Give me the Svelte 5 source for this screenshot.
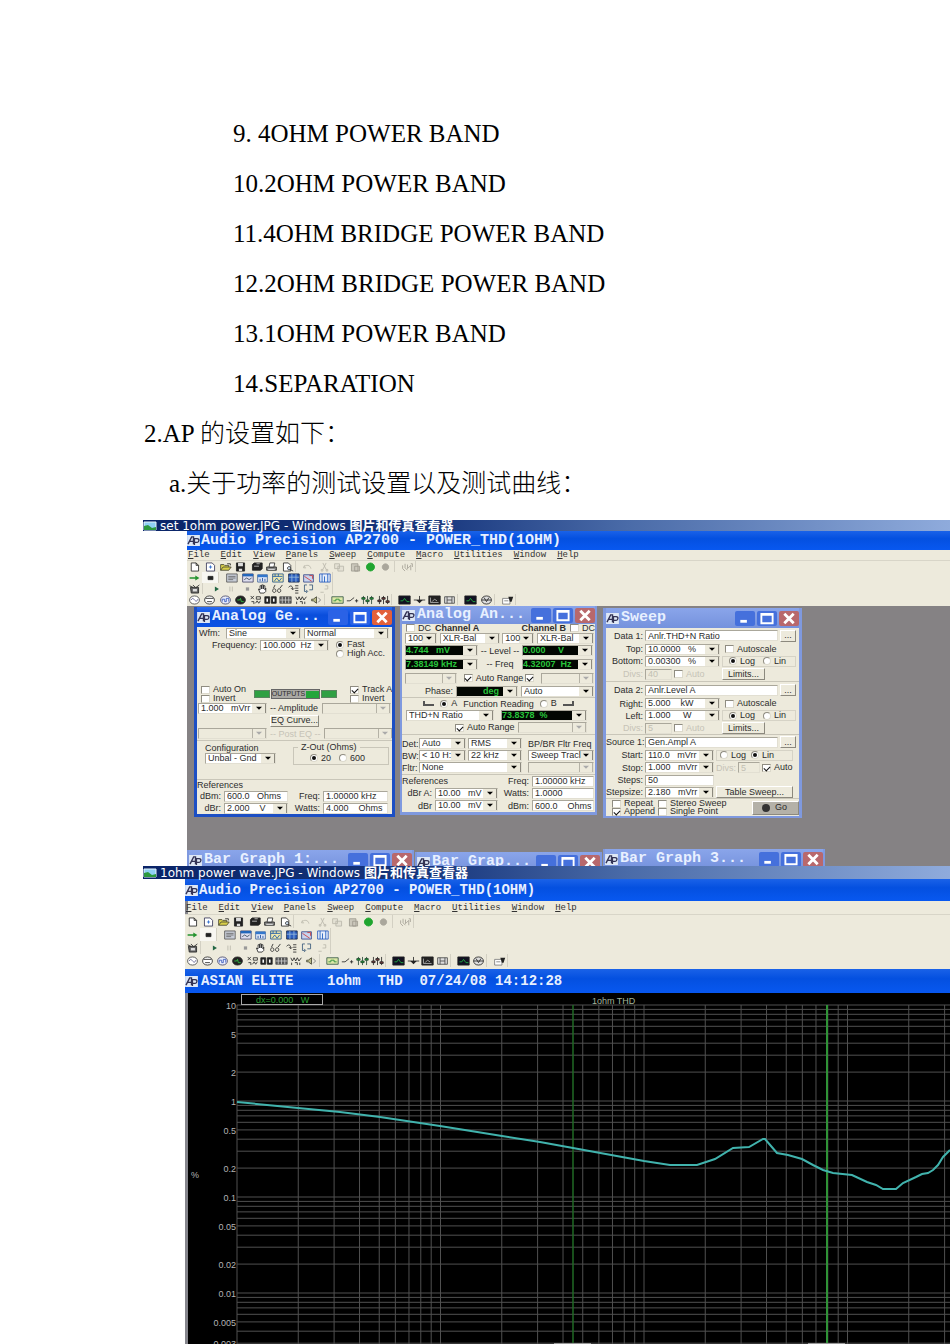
<script>
  const powerBands = [
    '9. 4OHM POWER BAND',
    '10.2OHM POWER BAND',
    '11.4OHM BRIDGE POWER BAND',
    '12.2OHM BRIDGE POWER BAND',
    '13.1OHM POWER BAND',
    '14.SEPARATION'
  ];

  const menus = ['File', 'Edit', 'View', 'Panels', 'Sweep', 'Compute', 'Macro', 'Utilities', 'Window', 'Help'];

  // Each icon is a list of [path, fill, stroke] on a 16 x 12 grid.
  const K = '#222';
  const G = '#b9b6aa';
  const N = 'none';
  const icons = {
    new: [['M4 1h6l3 3v7H4z M10 1v3h3', '#fff', K]],
    newTest: [['M3 1h7l3 3v7H3z', '#fff', '#335'], ['M6 6h4 M8 4v4', N, '#26c']],
    open: [['M2 10V3h4l1 1h5v2 M2 10l3-4h10l-3 4z', '#d8cf4a', '#443'], ['M10 2h4v2', N, K]],
    save: [['M3 1h10v10H3z', K, K], ['M5 1h6v4H5z M6 8h4v3H6z', '#ddd', N]],
    saveAll: [['M5 1h10v7l-2 2H3V3z', K, K], ['M5 5h6 M8 2h4', N, '#ccc']],
    print: [['M2 6h12v4H2z', '#888', K], ['M5 6l1-5h6l-1 5z', '#fff', K], ['M4 9h8', N, '#eee']],
    preview: [['M3 1h6l3 3v7H3z', '#fff', K], ['M10 5.500a2 2 0 1 1-.1 0z M11 9l4 2', '#cde', K]],
    undo: [['M3 4l-1 3h3 M2 6c3-3 8-3 9 2', N, G]],
    cut: [['M6 1l4 8 M10 1L6 9 M5 9h1v2H4V9z M10 9h2v2h-2z', N, G]],
    copy: [['M2 2h6v6H2z M6 5h7v6H6z', '#e4e1d4', G]],
    paste: [['M3 2h8v9H3z M7 5h6v6H7z', '#cbc8bc', '#9c998e']],
    go: [['M8 1a5 5 0 1 1-.1 0z', '#1fa52f', '#1fa52f']],
    stopGrey: [['M8 2a4 4 0 1 1-.1 0z', '#aaa79c', '#aaa79c']],
    ruler: [['M2 4v4l3 3 M5 2v5l3 3 M8 3v5l4-4v6 M12 2h2v4', N, '#a29f94']],
    arrow: [['M2 5h7V3l5 3-5 3V7H2z', '#23922d', N]],
    block: [['M5 4h6v4H5z', K, K]],
    p1: [['M2 1h13v10H2z', '#c7ccd6', '#555'], ['M4 4h9 M4 6h9 M4 8h6', N, '#666']],
    p2: [['M2 1h13v10H2z', '#dde', '#446'], ['M2 1h13v3H2z', '#26b', N], ['M4 8l3-2 3 2 3-2', N, '#345']],
    p3: [['M2 2h12v9H2z', '#dfe6f6', '#469'], ['M2 2h12v3H2z', '#37c', N], ['M5 7v3 M8 6v4 M11 7v3', N, '#149']],
    p4: [['M2 1h13v10H2z', '#efe7ac', '#258'], ['M2 4h12 M5 1v3 M9 1v3 M4 10l3-4 3 4 3-4', N, '#15a']],
    p5: [['M2 1h13v10H2z', '#2c5fc0', '#124'], ['M2 5h13 M6 1v10 M11 1v10', N, '#9bd']],
    p6: [['M2 2h12v9H2z', '#c8d4ee', '#348'], ['M3 4l9 6 M9 3h4v4', N, '#c33']],
    p7: [['M2 1h13v10H2z', '#e8eefa', '#25b'], ['M5 1v10 M8 4v7 M12 1v10', N, '#15b']],
    macro: [['M3 4h10v7H4z', '#666', K], ['M2 2l4 2 M6 1l3 3 M14 1l-4 3', N, K], ['M6 6h5v3H6z', '#ddd', N]],
    play: [['M6 3l5 3-5 3z', '#264', N]],
    pause: [['M6 3v6 M9 3v6', N, G]],
    stop: [['M6 4h4v4H6z', '#999', N]],
    hand: [['M5 11L3 6l2 1V2h2v4-5h2v5-4h2v5l1-2v4l-2 2z', '#fff', K]],
    glasses: [['M2 8c0-3 4-3 4 0s-4 3-4 0 M8 8c0-3 4-3 4 0s-4 3-4 0 M3 5l2-4 M11 5l3-4', N, K]],
    step1: [['M2 4c2-3 5-2 5 2 M5 5l2 2 2-2 M10 2h4 M10 5h4 M10 8h4 M10 11h4', N, K]],
    step2: [['M6 1H3v8h3 M5 7l2 2-2 2 M9 1h4v6H9', N, '#357']],
    step3: [['M3 10h4 M9 2h3v4H8', N, G]],
    genA: [['M8 1c8 0 8 10 0 10S0 1 8 1z', '#fff', '#444'], ['M4 6c2-4 3-1 4 0s3 3 4-1', N, '#558']],
    genB: [['M8 1c8 0 8 10 0 10S0 1 8 1z', '#fff', K], ['M3 4h10 M5 8h6', N, K]],
    genC: [['M8 1c8 0 8 10 0 10S0 1 8 1z', '#e8ecfa', '#446'], ['M4 8V5h3v3h2V4h3v4', N, '#35b']],
    genD: [['M8 1c8 0 8 10 0 10S0 1 8 1z', K, K], ['M4 6h3l1-2 1 4h3', N, '#3c4']],
    dcx: [['M2 1l4 4 M6 1L2 5 M9 2h5v3H9z M3 8h3v3 M8 10l2-3 2 3 2-3', N, K]],
    pair: [['M1 2h6v8H1z M9 2h6v8H9z', K, K], ['M3 4h2v4H3z M11 4h2v4h-2z', '#fff', N]],
    bars: [['M1 2h14v8H1z', '#555', '#555'], ['M1 6h14 M4 2v8 M8 2v8 M12 2v8', N, '#ccc']],
    wave: [['M1 2l2 4 2-4 2 4 2-4 2 4 3-4 M2 8v3 M6 8h3v3 M12 8v3', N, K]],
    speaker: [['M2 5h2l4-3v8L4 7H2z', '#bb8', '#443'], ['M10 3l3 3-3 3', N, '#777']],
    meter: [['M1 2h14v8H1z', '#dce8a8', '#354'], ['M3 7h3V5h4v2h3', N, '#283']],
    sw: [['M1 7h4l5-4 M11 7h4 M13 5v4', N, K]],
    mixA: [['M3 1v10 M8 1v10 M13 1v10', N, '#243'], ['M1 3h4v2H1z M6 6h4v2H6z M11 3h4v2h-4z', '#2a3', '#243']],
    mixB: [['M3 1v10 M8 1v10 M13 1v10', N, K], ['M1 6h4v2H1z M6 3h4v2H6z M11 7h4v2h-4z', '#844', K]],
    scope: [['M1 1h14v10H1z', '#112', K], ['M3 7h3l2-3 3 4h3', N, '#2b4']],
    down: [['M1 6h14 M8 1v6', N, K], ['M4 6h8l-4 4z', K, N]],
    scopeB: [['M1 1h14v10H1z', '#222', K], ['M3 3v6h10 M5 8l3-3 3 2', N, '#bbb']],
    film: [['M2 2h12v8H2z M5 2v8 M11 2v8 M5 6h6', '#ddd', '#444']],
    globe: [['M8 1c8 0 8 10 0 10S0 1 8 1z', '#ddd', K], ['M2 6h12 M5 3l3 5 3-5', N, K]],
    note: [['M2 4h9v7H2z', '#fff', '#777'], ['M4 7h5', N, '#777'], ['M9 2h6l-2 6h-2z', K, N]]
  };

  const toolRows = [
    [['new', 'newTest', 'open', 'save', 'saveAll', 'print', 'preview'], ['undo', 'cut', 'copy', 'paste', 'go', 'stopGrey'], ['ruler']],
    [['arrow', 'block'], ['p1', 'p2', 'p3', 'p4', 'p5', 'p6', 'p7']],
    [['macro'], ['play', 'pause', 'stop', 'hand', 'glasses', 'step1', 'step2', 'step3']],
    [['genA', 'genB', 'genC', 'genD', 'dcx', 'pair', 'bars', 'wave', 'speaker'], ['meter', 'sw', 'mixA', 'mixB'], ['scope', 'down', 'scopeB', 'film'], ['scope', 'globe'], ['note']]
  ];

  // Keeps runs of spaces between a number and its unit.
  const fixed = (text) => text.replaceAll(' ', '\u00a0');

  // Logarithmic chart geometry, in plot units.
  const left = 49;
  const top = 12;
  const decadeX = 203.5;
  const decadeY = 96;
  const xs = [];
  for (let d = 0; d < 4; d++) for (let n = 1; n < 10; n++) xs.push(left + decadeX * (d + Math.log10(n)));
  const ys = [];
  for (let d = 0; d < 4; d++) for (let n = 10; n > 1; n--) ys.push(top + decadeY * (d + 1 - Math.log10(n)));
  const ticks = ['10', '5', '2', '1', '0.5', '0.2', '0.1', '0.05', '0.02', '0.01', '0.005', '0.003'];
  const tickY = (t) => top + decadeY * (1 - Math.log10(Number(t)));
  const curve =
    '49,109 110,115 152,119 192,124 252,133 314,143 352,149 385,155 456,168 482,172 509,172 527,166 545,155 561,154 575,146 577,146 589,160 600,162 614,166 625,172 635,177 645,180 664,182 679,189 688,192 695,196 708,196 715,190 728,184 734,181 740,180 745,177 750,172 755,164 762,157';
</script>

{#snippet logo()}
  <svg class="logo" viewBox="0 0 14 12" aria-hidden="true">
    <path d="M0 0h14v12H0z" fill="#dfe8f6" />
    <path d="M1 10l4-8h2v8M3 7h4M8 11V4h3c3 0 2 4 0 4H8" fill="none" stroke="#335" stroke-width="1.500" />
  </svg>
{/snippet}

{#snippet viewerBar(text)}
  <header class="viewer-bar">
    <svg viewBox="0 0 14 10" aria-hidden="true">
      <path d="M1 1h12v8H1z" fill="#8fd0f5" stroke="#e8f4fa" />
      <path d="M1 9V5l4-1 4 3 4-1v3z" fill="#2d9a3f" />
    </svg>
    <span>{text} - Windows <b>图片和传真查看器</b></span>
  </header>
{/snippet}

{#snippet appChrome()}
  <h2 class="app-title">{@render logo()}<span>Audio Precision AP2700 - POWER_THD(1OHM)</span></h2>
  <nav class="menu">
    {#each menus as m}<button><u>{m[0]}</u>{m.slice(1)}</button>{/each}
  </nav>
  <div class="tools">
    {#each toolRows as row, i}
      <div class="tool-row t{i}">
        {#each row as group}
          <div class="tool-group" style:flex-grow={group.length}>
            {#each group as name}
              <button aria-label={name} class:pressed={name === 'block'}>
                <svg viewBox="0 0 16 12" aria-hidden="true">
                  {#each icons[name] as [d, fill, stroke]}<path {d} {fill} {stroke} />{/each}
                </svg>
              </button>
            {/each}
          </div>
        {/each}
      </div>
    {/each}
  </div>
{/snippet}

{#snippet caption(text)}
  <header class="caption">
    {@render logo()}
    <h3>{text}</h3>
    <button aria-label="Minimize"><svg viewBox="0 0 20 16"><path d="M5 11h7" stroke="#fff" stroke-width="3" /></svg></button>
    <button aria-label="Maximize"><svg viewBox="0 0 20 16"><path d="M4 3h12v10H4zM4 4h12" fill="none" stroke="#fff" stroke-width="2" /></svg></button>
    <button aria-label="Close" class="close"><svg viewBox="0 0 20 16"><path d="M5 3l10 10M15 3L5 13" stroke="#fff" stroke-width="3" /></svg></button>
  </header>
{/snippet}

{#snippet pick(id, value, label = null, kind = '')}
  <select {id} aria-label={label} class={kind} disabled={kind === 'off'}><option>{fixed(value)}</option></select>
{/snippet}

{#snippet tick(text, checked = false, disabled = false)}
  <label class="choice" class:dim={disabled}><input type="checkbox" {checked} {disabled} />{text}</label>
{/snippet}

{#snippet dot(name, text, checked = false)}
  <label class="choice"><input type="radio" {name} {checked} />{text}</label>
{/snippet}

<main>
  <section class="text">
    <ol>
      {#each powerBands as line}<li>{line}</li>{/each}
    </ol>
    <p>2.AP 的设置如下：</p>
    <p class="sub">a.关于功率的测试设置以及测试曲线：</p>
  </section>

  <section class="shot first">
    {@render viewerBar('set 1ohm power.JPG')}
    <div class="app">
      {@render appChrome()}
      <div class="desktop">
        <article class="window active generator">
          {@render caption('Analog Ge...')}
          <div class="body">
            <div class="g-wave">
              <label for="wfm">Wfm:</label>{@render pick('wfm', 'Sine')}{@render pick('wfm2', 'Normal', 'Waveform mode')}
            </div>
            <div class="g-freq">
              <label for="freq">Frequency:</label>{@render pick('freq', '100.000  Hz')}
              <div class="stack">{@render dot('speed', 'Fast', true)}{@render dot('speed', 'High Acc.')}</div>
            </div>
            <div class="g-out">
              <div class="stack">{@render tick('Auto On')}{@render tick('Invert')}</div>
              <div class="outputs"><i></i><button>OUTPUTS<i></i></button><i></i></div>
              <div class="stack">{@render tick('Track A', true)}{@render tick('Invert')}</div>
            </div>
            <div class="g-three">
              {@render pick('amp', '1.000   mVrr')}<label for="amp">-- Amplitude</label>{@render pick('amp2', '', 'Amplitude B', 'off')}
            </div>
            <div class="g-three"><span></span><button class="push">EQ Curve...</button><span></span></div>
            <div class="g-three dim">
              {@render pick('eq', '', null, 'off')}<label for="eq">-- Post EQ --</label>{@render pick('eq2', '', 'Post EQ B', 'off')}
            </div>
            <div class="g-config rule">
              <div><label for="conf">Configuration</label>{@render pick('conf', 'Unbal - Gnd')}</div>
              <fieldset><legend>Z-Out (Ohms)</legend>{@render dot('z', '20', true)}{@render dot('z', '600')}</fieldset>
            </div>
            <div class="rule"><span>References</span></div>
            <div class="g-ref">
              <label for="dbm">dBm:</label><input id="dbm" value="600.0   Ohms" />
              <label for="rf">Freq:</label><input id="rf" value="1.00000 kHz" />
            </div>
            <div class="g-ref">
              <label for="dbr">dBr:</label>{@render pick('dbr', '2.000    V')}
              <label for="wt">Watts:</label><input id="wt" value="4.000    Ohms" />
            </div>
          </div>
        </article>

        <article class="window analyzer">
          {@render caption('Analog An...')}
          <div class="body">
            <div class="a-head">
              {@render tick('DC')}<b>Channel A</b><b class="right">Channel B</b>{@render tick('DC')}
            </div>
            <div class="a-input">
              {@render pick('ia', '100', 'Impedance A')}{@render pick('ca', 'XLR-Bal', 'Connector A')}
              {@render pick('ib', '100', 'Impedance B')}{@render pick('cb', 'XLR-Bal', 'Connector B')}
            </div>
            <div class="a-meter">
              {@render pick('la', '4.744   mV', null, 'meter')}<label for="la">-- Level --</label>{@render pick('lb', '0.000     V', 'Level B', 'meter')}
            </div>
            <div class="a-meter">
              {@render pick('fa', '7.38149 kHz', null, 'meter')}<label for="fa">-- Freq</label>{@render pick('fb', '4.32007  Hz', 'Frequency B', 'meter')}
            </div>
            <div class="a-range">
              {@render pick('ra', '', 'Range A', 'off')}
              <span class="pair">{@render tick('Auto Range', true)}<input type="checkbox" checked aria-label="Auto Range B" /></span>
              {@render pick('rb', '', 'Range B', 'off')}
            </div>
            <div class="a-phase">
              <label for="ph">Phase:</label>{@render pick('ph', 'deg', null, 'meter end')}{@render pick('pa', 'Auto', 'Phase range')}
            </div>
            <div class="a-func rule">
              <i class="hook"></i>{@render dot('fn', 'A', true)}<span>Function Reading</span>{@render dot('fn', 'B')}<i class="hook flip"></i>
            </div>
            <div class="a-thd">
              {@render pick('thd', 'THD+N Ratio', 'Function')}{@render pick('thdv', '73.8378  %', 'Reading', 'meter')}
            </div>
            <div class="a-auto">{@render tick('Auto Range', true)}{@render pick('far', '', 'Function range', 'off')}</div>
            <div class="a-filter rule tall">
              <label for="det">Det:</label>{@render pick('det', 'Auto')}{@render pick('rms', 'RMS', 'Detector')}<label for="bp">BP/BR Fltr Freq</label>
            </div>
            <div class="a-filter">
              <label for="bw">BW:</label>{@render pick('bw', '< 10 H:')}{@render pick('bw2', '22 kHz', 'High bandwidth')}{@render pick('bp', 'Sweep Tracl')}
            </div>
            <div class="a-filter merged">
              <label for="fl">Fltr:</label>{@render pick('fl', 'None')}{@render pick('fl2', '', 'Filter frequency', 'off')}
            </div>
            <div class="a-ref rule">
              <span class="span2">References</span><label for="arf">Freq:</label><input id="arf" value="1.00000 kHz" />
            </div>
            <div class="a-ref">
              <label for="ara">dBr A:</label>{@render pick('ara', '10.00   mV')}<label for="arw">Watts:</label><input id="arw" value="1.0000" />
            </div>
            <div class="a-ref">
              <label for="arb">dBr</label>{@render pick('arb', '10.00   mV')}<label for="arm">dBm:</label><input id="arm" value="600.0    Ohms" />
            </div>
          </div>
        </article>

        <article class="window sweep">
          {@render caption('Sweep')}
          <div class="body">
            <div class="s-source"><label for="d1">Data 1:</label><input id="d1" value="Anlr.THD+N Ratio" /><button class="push">...</button></div>
            <div class="s-line"><label for="tp">Top:</label>{@render pick('tp', '10.0000   %')}{@render tick('Autoscale')}</div>
            <div class="s-line"><label for="bt">Bottom:</label>{@render pick('bt', '0.00300   %')}<span class="box">{@render dot('d1', 'Log', true)}{@render dot('d1', 'Lin')}</span></div>
            <div class="s-divs"><label for="v1" class="dim">Divs:</label><input id="v1" value="40" disabled />{@render tick('Auto', false, true)}<button class="push">Limits...</button></div>
            <div class="s-source rule"><label for="d2">Data 2:</label><input id="d2" value="Anlr.Level A" /><button class="push">...</button></div>
            <div class="s-line"><label for="rt">Right:</label>{@render pick('rt', '5.000    kW')}{@render tick('Autoscale')}</div>
            <div class="s-line"><label for="lf">Left:</label>{@render pick('lf', '1.000     W')}<span class="box">{@render dot('d2', 'Log', true)}{@render dot('d2', 'Lin')}</span></div>
            <div class="s-divs"><label for="v2" class="dim">Divs:</label><input id="v2" value="5" disabled />{@render tick('Auto', false, true)}<button class="push">Limits...</button></div>
            <div class="s-source rule"><label for="s1">Source 1:</label><input id="s1" value="Gen.Ampl A" /><button class="push">...</button></div>
            <div class="s-step"><label for="st">Start:</label>{@render pick('st', '110.0   mVrr')}<span class="box">{@render dot('s1', 'Log')}{@render dot('s1', 'Lin', true)}</span></div>
            <div class="s-stop"><label for="sp">Stop:</label>{@render pick('sp', '1.000   mVrr')}<label for="v3" class="dim">Divs:</label><input id="v3" value="5" disabled />{@render tick('Auto', true)}</div>
            <div class="s-step"><label for="ss">Steps:</label><input id="ss" value="50" /></div>
            <div class="s-step"><label for="sz">Stepsize:</label>{@render pick('sz', '2.180   mVrr')}<button class="push">Table Sweep...</button></div>
            <div class="s-foot rule">
              <div class="stack">{@render tick('Repeat')}{@render tick('Append', true)}</div>
              <div class="stack">{@render tick('Stereo Sweep')}{@render tick('Single Point')}</div>
              <button class="push go"><i></i>Go</button>
            </div>
          </div>
        </article>

        <article class="window bar1">{@render caption('Bar Graph 1:...')}</article>
        <article class="window bar2">{@render caption('Bar Grap...')}</article>
        <article class="window bar3">{@render caption('Bar Graph 3...')}</article>
      </div>
    </div>
  </section>

  <section class="shot second">
    {@render viewerBar('1ohm power wave.JPG')}
    <div class="app">
      {@render appChrome()}
      <h2 class="graph-title">{@render logo()}<span>ASIAN ELITE    1ohm  THD  07/24/08 14:12:28</span></h2>
      <svg class="plot" viewBox="0 0 762 351" preserveAspectRatio="xMinYMin slice" role="img" aria-label="1ohm THD">
        <g stroke="#505050">
          {#each xs as x}<path d="M{x} {top}V351" />{/each}
          {#each ys as y}<path d="M{left} {y}H762" />{/each}
        </g>
        <path d="M385 12V351" stroke="#206a24" stroke-width="1.500" />
        <path d="M639 12V351" stroke="#2f9236" stroke-width="2" />
        <path d="M366 350.500h37M620 350.500h37" stroke="#999" />
        <polyline points={curve} fill="none" stroke="#41b3ad" stroke-width="2" />
        <rect x="53.500" y="1.500" width="81" height="10" fill="#000" stroke="#aaa" />
        <text class="mark" x="68" y="10">dx=0.000   W</text>
        <text class="name" x="404" y="11">1ohm THD</text>
        {#each ticks as t}<text class="tick" x="48" y={tickY(t) + 4}>{t}</text>{/each}
        <text class="tick" x="11" y="185">%</text>
      </svg>
    </div>
  </section>
</main>

<style>
  :global(body) {
    margin: 0;
    background: #fff;
  }
  * {
    box-sizing: border-box;
  }
  main {
    padding: 109px 0 0 143px;
    overflow: hidden;
    font-family: 'Liberation Sans', Arial, sans-serif;
  }
  .text {
    font: 300 25px/50px 'Liberation Serif', 'Noto Sans CJK SC', serif;
    color: #000;
    padding-bottom: 11px;
  }
  .text ol {
    list-style: none;
    margin: 0;
    padding: 0 0 0 90px;
  }
  .text p {
    margin: 0;
    padding-left: 1px;
  }
  .text .sub {
    padding-left: 26px;
  }
  h2,
  h3 {
    margin: 0;
    font: bold 15px/18px 'Liberation Mono', 'Courier New', monospace;
    white-space: pre;
    color: #e8f0ff;
  }
  button,
  input,
  select {
    font: inherit;
    color: inherit;
    margin: 0;
    padding: 0;
    border: 0;
    background: none;
    border-radius: 0;
    min-width: 0;
  }
  .viewer-bar {
    display: flex;
    align-items: center;
    gap: 3px;
    height: 11px;
    background: linear-gradient(90deg, #0a2468, #16357c 35%, #4a6ba8 60%, #8fabdc);
    color: #fff;
    font: 12px/11px 'DejaVu Sans', 'Noto Sans CJK SC', sans-serif;
    white-space: pre;
  }
  .viewer-bar b {
    font: bold 13px/11px 'Noto Sans CJK SC', sans-serif;
  }
  .viewer-bar svg {
    width: 14px;
    height: 10px;
  }
  .app {
    margin-left: 44px;
    background: #edeadc;
  }
  .app-title,
  .graph-title {
    display: flex;
    align-items: center;
    gap: 1px;
    height: 19px;
    background: linear-gradient(#1a62e8, #0450e0 40%, #0858f0);
  }
  .logo {
    width: 13px;
    height: 11px;
    flex: none;
  }
  .menu {
    display: flex;
    gap: 11px;
    height: 11px;
    padding-left: 1px;
    font: 9px/11px 'Liberation Mono', monospace;
    color: #333;
    border-bottom: 1px solid #d8d5c8;
  }
  .tools {
    display: flex;
    flex-direction: column;
    padding-bottom: 1px;
  }
  .tool-row {
    display: flex;
    gap: 5px;
    width: 329px;
    height: 11px;
  }
  .tool-row.t0 {
    width: 229px;
  }
  .tool-row.t1,
  .tool-row.t2 {
    width: 146px;
  }
  .tool-group {
    display: flex;
    flex-basis: 0;
    border-right: 1px solid #d3d0c3;
  }
  .tool-group button {
    flex: 1;
    display: grid;
    place-items: center;
  }
  .tool-group .pressed {
    background: #f8f7f2;
  }
  .tool-group svg {
    width: 13px;
    height: 10px;
  }
  .desktop {
    position: relative;
    height: 260px;
    overflow: hidden;
    background: #858284;
  }
  .window {
    position: absolute;
    border: 2px solid #7f99df;
    border-top: 0;
    background: #edeadc;
    font-size: 9px;
    line-height: 10px;
    color: #2c2c2c;
    white-space: nowrap;
  }
  .generator {
    left: 7px;
    top: 1px;
    width: 201px;
    border: 3px solid #1c4fc4;
    border-top: 0;
  }
  .analyzer {
    left: 213px;
    top: 0;
    width: 197px;
    border-bottom-width: 3px;
  }
  .sweep {
    left: 416px;
    top: 2px;
    width: 199px;
    border-width: 0 3px 2px;
  }
  .bar1 {
    left: 0;
    top: 244px;
    width: 227px;
  }
  .bar2 {
    left: 228px;
    top: 246px;
    width: 187px;
  }
  .bar3 {
    left: 416px;
    top: 243px;
    width: 222px;
  }
  .caption {
    display: flex;
    align-items: center;
    gap: 2px;
    height: 20px;
    background: linear-gradient(#8aa5ea, #7592dd);
  }
  .analyzer .caption {
    height: 18px;
  }
  .active .caption {
    background: linear-gradient(#2a6cf0, #0a4edc 40%, #0b52e4);
  }
  .caption h3 {
    flex: 1;
    min-width: 0;
  }
  .caption button {
    width: 20px;
    height: 15px;
    flex: none;
    border-radius: 2px;
    background: #4570dc;
  }
  .active .caption button {
    background: #2a62e6;
  }
  .caption .close {
    background: #b8686c;
  }
  .active .caption .close {
    background: #e2603a;
  }
  .caption button svg {
    display: block;
    width: 20px;
    height: 15px;
  }
  .body {
    display: grid;
    overflow: hidden;
  }
  .body > div {
    display: grid;
    align-items: center;
    min-width: 0;
  }
  .rule {
    border-top: 1px solid #c9c6b9;
  }
  .generator .body {
    grid-template-rows: 12px 46px 17px 12px 13px 13px 39px 11px 12px 12px;
  }
  .analyzer .body {
    grid-template-rows: 8px 12px 13px 14px 14px 12px 12px 12px 13px 16px 11px 13px 13px 12px 13px;
  }
  .sweep .body {
    grid-template-rows: 15px 12px 12px 14px 17px 11px 13px 12px 15px 12px 13px 12px 12px 18px;
  }
  select,
  input:not([type]) {
    appearance: none;
    width: 100%;
    height: 11px;
    padding: 0 0 0 2px;
    border: 1px solid #aaa79b;
    border-right-color: #e2dfd2;
    border-bottom-color: #e2dfd2;
    background: #fff;
    line-height: 9px;
    white-space: pre;
    overflow: hidden;
  }
  select {
    background: #fff url("data:image/svg+xml,%3Csvg xmlns='http://www.w3.org/2000/svg' width='14' height='10'%3E%3Cpath d='M0 0h14v10H0z' fill='%23edeadc'/%3E%3Cpath d='M0 9.500h13.500V0' fill='none' stroke='%238c897e'/%3E%3Cpath d='M4 3h6L7 6z'/%3E%3C/svg%3E") right center no-repeat;
  }
  select.off,
  input:disabled {
    background-color: #edeadc;
    color: #c2bfb3;
    opacity: 1;
  }
  select.off {
    background-image: url("data:image/svg+xml,%3Csvg xmlns='http://www.w3.org/2000/svg' width='14' height='10'%3E%3Cpath d='M0 9.500h13.500V0M.5 9V0' fill='none' stroke='%23b5b2a6'/%3E%3Cpath d='M4 3h6L7 6z' fill='%23aaa'/%3E%3C/svg%3E");
  }
  select.meter {
    background-color: #020602;
    color: #27c43a;
    font-weight: bold;
    padding-left: 0;
  }
  select.end {
    padding-left: 26px;
  }
  .dim {
    color: #c6c3b7;
  }
  .choice {
    display: flex;
    align-items: center;
    gap: 3px;
    line-height: 9px;
  }
  input[type='checkbox'],
  input[type='radio'] {
    appearance: none;
    flex: none;
    display: grid;
    place-items: center;
    width: 9px;
    height: 8px;
    background: #fff;
    border: 1px solid #8f8c81;
    border-right-color: #dcd9cc;
    border-bottom-color: #dcd9cc;
  }
  input[type='radio'] {
    width: 8px;
    border-radius: 50%;
  }
  input[type='radio']:checked::after {
    content: '';
    width: 4px;
    height: 4px;
    border-radius: 50%;
    background: #111;
  }
  input[type='checkbox']:checked::after {
    content: '';
    width: 5px;
    height: 3px;
    border: solid #111;
    border-width: 0 0 1px 1px;
    transform: rotate(-45deg);
  }
  .stack {
    display: flex;
    flex-direction: column;
  }
  .push {
    height: 12px;
    line-height: 9px;
    background: #edeadc;
    border: 1px solid #fff;
    border-right-color: #8c897e;
    border-bottom-color: #8c897e;
    text-align: center;
  }
  .g-wave {
    grid-template-columns: 24px 75px 1fr;
    column-gap: 3px;
    padding: 0 3px 0 2px;
  }
  .body > .g-freq {
    grid-template-columns: 60px 69px 1fr;
    column-gap: 3px;
    align-items: start;
    padding-top: 1px;
    text-align: right;
  }
  .g-freq .stack {
    padding-left: 4px;
  }
  .g-out {
    grid-template-columns: 53px 83px 1fr;
    padding-left: 4px;
  }
  .g-out .stack:last-child {
    padding-left: 13px;
  }
  .outputs {
    display: flex;
    align-items: center;
    gap: 1px;
  }
  .outputs > i {
    flex: 1;
    height: 8px;
    background: #2fa043;
    border: 1px solid #5a8560;
  }
  .outputs button {
    display: flex;
    align-items: center;
    gap: 1px;
    height: 10px;
    background: #aaa9a4;
    border: 1px solid #666;
    font-size: 7px;
  }
  .outputs button i {
    width: 13px;
    height: 7px;
    background: #23a53a;
  }
  .g-three {
    grid-template-columns: 69px 1fr 69px;
    column-gap: 3px;
    padding: 0 1px;
  }
  .body > .g-config {
    grid-template-columns: 71px 96px;
    column-gap: 17px;
    padding-left: 8px;
    align-items: start;
  }
  .g-config div {
    display: grid;
    padding-top: 2px;
  }
  fieldset {
    display: flex;
    gap: 8px;
    min-width: 0;
    height: 23px;
    margin: 1px 0 0;
    padding: 0 0 0 16px;
    border: 1px solid #c9c6b9;
  }
  legend {
    margin-left: -12px;
    padding: 0 3px;
  }
  .g-ref {
    grid-template-columns: 24px 64px 1fr 65px;
    column-gap: 3px;
    padding-right: 4px;
    text-align: right;
  }
  .body > .a-head {
    display: flex;
    align-items: center;
    gap: 4px;
    padding-left: 4px;
    line-height: 8px;
  }
  .a-head .right {
    margin-left: auto;
  }
  .a-input {
    grid-template-columns: 32px 60px 32px 57px;
    justify-content: space-between;
    padding: 0 1px 0 3px;
  }
  .a-meter {
    grid-template-columns: 73px 1fr 71px;
    padding: 0 2px 0 3px;
    text-align: center;
  }
  .a-range {
    grid-template-columns: 52px 1fr 53px;
    column-gap: 3px;
    padding: 0 1px 0 3px;
  }
  .pair {
    display: flex;
    gap: 2px;
    align-items: center;
    justify-content: center;
  }
  .a-phase {
    grid-template-columns: 51px 62px 1fr;
    column-gap: 3px;
    padding: 0 1px 0 0;
    text-align: right;
  }
  .body > .a-func {
    display: flex;
    gap: 6px;
    justify-content: center;
  }
  .hook {
    width: 11px;
    height: 5px;
    border: solid #555;
    border-width: 0 0 2px 2px;
  }
  .flip {
    border-width: 0 2px 2px 0;
  }
  .a-thd {
    grid-template-columns: 88px 86px;
    column-gap: 7px;
    padding-left: 4px;
  }
  .a-auto {
    grid-template-columns: 60px 69px;
    column-gap: 3px;
    padding-left: 53px;
  }
  .a-filter {
    grid-template-columns: 15px 47px 54px 1fr;
    column-gap: 2px;
    padding-right: 1px;
  }
  .merged {
    grid-template-columns: 15px 103px 1fr;
  }
  .a-filter > :last-child {
    width: auto;
    margin-left: 4px;
  }
  .tall {
    padding-top: 2px;
  }
  .a-ref {
    grid-template-columns: 30px 63px 1fr 62px;
    column-gap: 3px;
    padding-right: 1px;
    text-align: right;
  }
  .a-ref .span2 {
    grid-column: span 2;
    text-align: left;
  }
  .s-source {
    grid-template-columns: 37px 1fr 16px;
    column-gap: 2px;
    padding-right: 3px;
  }
  .s-line {
    grid-template-columns: 37px 75px 1fr;
    column-gap: 2px;
    padding-right: 3px;
  }
  .s-line .choice {
    padding-left: 3px;
  }
  .s-divs {
    grid-template-columns: 37px 27px 46px 43px;
    column-gap: 2px;
  }
  .s-step {
    grid-template-columns: 37px 69px 77px;
    column-gap: 2px;
  }
  .s-stop {
    grid-template-columns: 37px 69px 20px 22px 1fr;
    column-gap: 2px;
  }
  .sweep .body > div > label:first-child {
    text-align: right;
  }
  .box {
    display: flex;
    gap: 5px;
    height: 11px;
    padding-left: 3px;
    border: 1px solid #d6d3c6;
  }
  .s-foot {
    grid-template-columns: 46px 1fr 47px;
    padding-left: 6px;
  }
  .s-foot .choice {
    height: 8px;
  }
  .go {
    display: flex;
    align-items: center;
    gap: 5px;
    height: 14px;
    padding-left: 9px;
    background: #b4b1a8;
  }
  .go i {
    width: 8px;
    height: 8px;
    border-radius: 50%;
    background: #333;
  }
  .second .viewer-bar {
    height: 13px;
  }
  .second .app {
    margin-left: 42px;
    border-left: 3px solid #85858c;
  }
  .second .app-title,
  .second .graph-title,
  .second .menu,
  .second .tools {
    margin-left: -3px;
  }
  .second h2 {
    font-size: 14px;
  }
  .second .app-title {
    height: 22px;
  }
  .second .menu {
    height: 14px;
    line-height: 14px;
  }
  .second .tools {
    background: #edeadc;
    padding-bottom: 2px;
  }
  .second .tool-row {
    height: 13px;
  }
  .second .tool-row.t3 {
    width: 323px;
  }
  .second .graph-title {
    height: 24px;
    gap: 3px;
  }
  .plot {
    display: block;
    width: 100%;
    height: 351px;
    background: #000;
  }
  .plot text {
    font: 9px 'Liberation Sans', Arial, sans-serif;
    white-space: pre;
  }
  .plot .tick {
    fill: #b4b4b4;
    text-anchor: end;
  }
  .plot .mark {
    fill: #2aa034;
  }
  .plot .name {
    fill: #a3b59a;
  }
</style>
